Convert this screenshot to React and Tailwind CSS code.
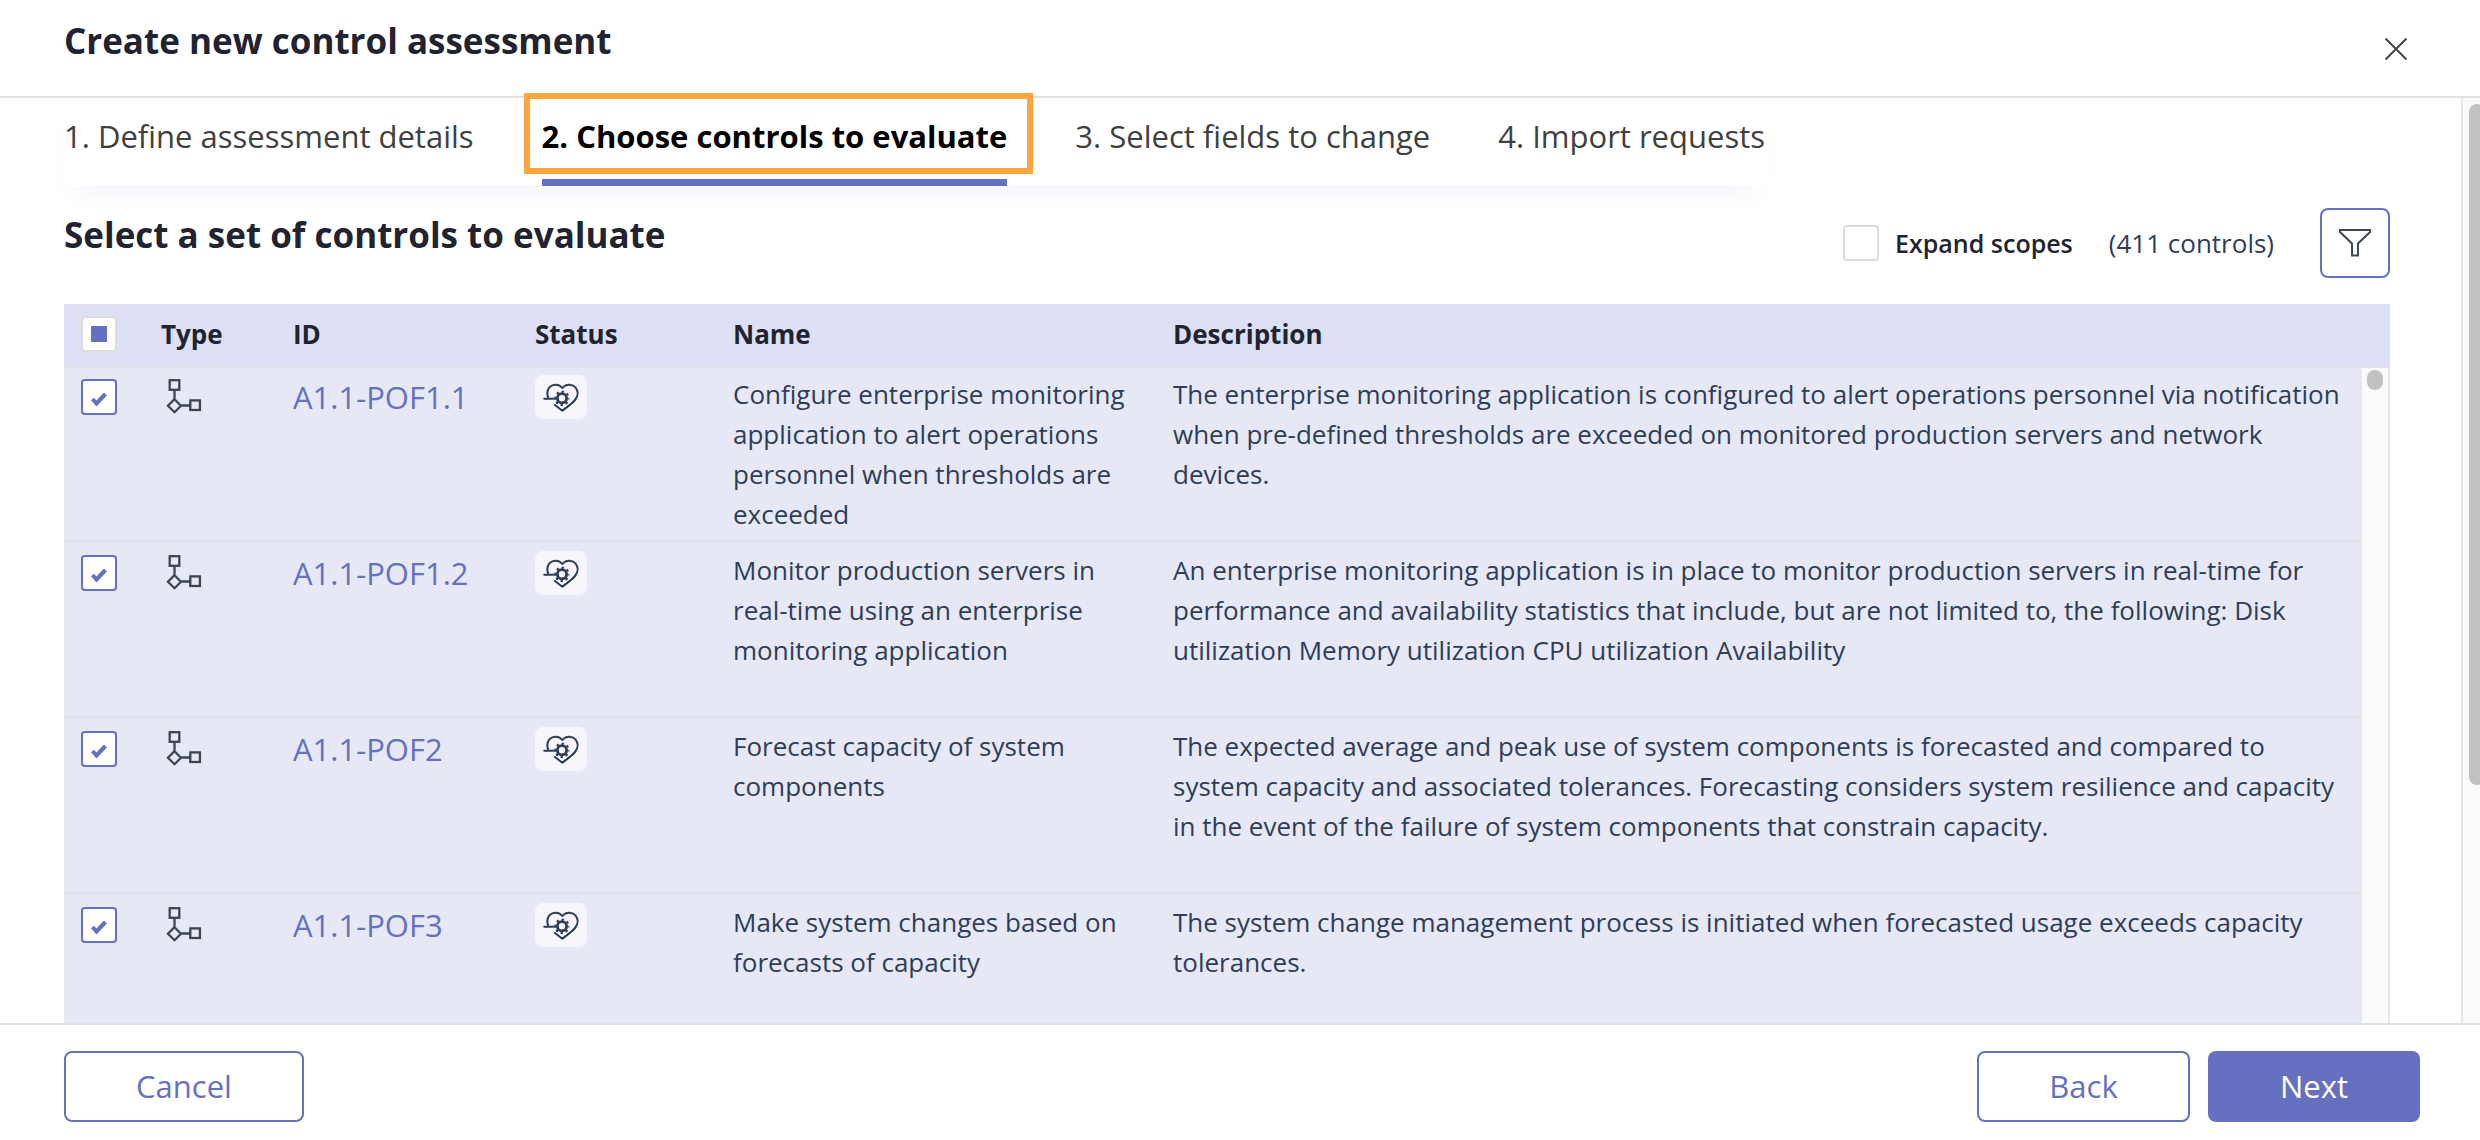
import { useState } from 'react';

const STEPS = [
  '1. Define assessment details',
  '2. Choose controls to evaluate',
  '3. Select fields to change',
  '4. Import requests',
];

const CONTROLS = [
  {
    id: 'A1.1-POF1.1',
    name: 'Configure enterprise monitoring application to alert operations personnel when thresholds are exceeded',
    description:
      'The enterprise monitoring application is configured to alert operations personnel via notification when pre-defined thresholds are exceeded on monitored production servers and network devices.',
  },
  {
    id: 'A1.1-POF1.2',
    name: 'Monitor production servers in real-time using an enterprise monitoring application',
    description:
      'An enterprise monitoring application is in place to monitor production servers in real-time for performance and availability statistics that include, but are not limited to, the following: Disk utilization Memory utilization CPU utilization Availability',
  },
  {
    id: 'A1.1-POF2',
    name: 'Forecast capacity of system components',
    description:
      'The expected average and peak use of system components is forecasted and compared to system capacity and associated tolerances. Forecasting considers system resilience and capacity in the event of the failure of system components that constrain capacity.',
  },
  {
    id: 'A1.1-POF3',
    name: 'Make system changes based on forecasts of capacity',
    description:
      'The system change management process is initiated when forecasted usage exceeds capacity tolerances.',
  },
];

function CloseIcon() {
  return (
    <svg viewBox="0 0 24 24" className="size-6" fill="none" stroke="#404040" strokeWidth="1.8">
      <path d="M1.5 1.5 22.5 22.5M22.5 1.5 1.5 22.5" />
    </svg>
  );
}

function FilterIcon() {
  return (
    <svg viewBox="0 0 32 28" className="h-7 w-8" fill="none" stroke="#3b4856" strokeWidth="2">
      <path d="M1 1H31V3L19 14.5V26.5H13V14.5L1 3Z" />
    </svg>
  );
}

function TypeIcon() {
  return (
    <svg viewBox="0 0 36 36" className="size-9" fill="none" stroke="#3a4752" strokeWidth="2.3">
      <rect x="3.7" y="1.2" width="9.6" height="9.6" />
      <rect x="24.3" y="21.4" width="9.6" height="9.6" />
      <path d="M8.5 11V20M15 26.5H24.5M8.5 20.2 15 26.7 8.5 33.2 2 26.7Z" />
    </svg>
  );
}

function HealthIcon() {
  return (
    <svg viewBox="0 0 36 30" className="h-[30px] w-9" fill="none" stroke="#2f3d57" strokeWidth="2" strokeLinecap="round" strokeLinejoin="round">
      <path d="M1.2 16.7H14M5.3 16C3.8 12 4.2 8 6.6 5.2C9.8 1.7 16 1.7 19.3 6C22.6 1.7 29 1.7 32.2 5.2C35.6 9 35.3 14 32 18C28.8 21.8 24 25 19.3 28.7L12 23" />
      <circle cx="19" cy="16.3" r="4.6" strokeWidth="2.8" />
      <circle cx="19" cy="16.3" r="6.5" strokeWidth="2.4" strokeDasharray="2.3 2.805" strokeDashoffset="1.15" strokeLinecap="butt" />
    </svg>
  );
}

function Checkbox({ checked, indeterminate, onChange, ...rest }) {
  return (
    <span className="relative block size-9 shrink-0">
      <input
        type="checkbox"
        checked={checked}
        onChange={onChange}
        className={`block size-9 appearance-none rounded-sm border-2 bg-white ${
          checked && !indeterminate ? 'border-[#6670c0]' : 'border-[#dcdcdc]'
        }`}
        {...rest}
      />
      {indeterminate && <span className="pointer-events-none absolute inset-0 m-auto size-4 bg-[#6670c0]" />}
      {checked && !indeterminate && (
        <svg viewBox="0 0 36 36" className="pointer-events-none absolute inset-0 size-9" fill="none" stroke="#6670c0" strokeWidth="4">
          <path d="M11.5 20 15.5 24.5 24.5 15" />
        </svg>
      )}
    </span>
  );
}

export default function App() {
  const [expand, setExpand] = useState(false);
  const [selected, setSelected] = useState(CONTROLS.map((c) => c.id));

  const toggle = (id) =>
    setSelected((prev) => (prev.includes(id) ? prev.filter((x) => x !== id) : [...prev, id]));

  return (
    <div className="flex h-screen flex-col bg-white font-['Open_Sans',sans-serif] text-[#2f3d57]">
      <header className="flex h-[98px] shrink-0 items-center justify-between border-b-2 border-[#dee2e6] pr-[72px] pl-16">
        <h1 className="pb-[14px] text-[35px] leading-[48px] font-bold text-[#212330]">Create new control assessment</h1>
        <button type="button" aria-label="Close" className="pt-[2px]">
          <CloseIcon />
        </button>
      </header>

      <div className="flex min-h-0 flex-1">
        <main className="flex min-w-0 flex-1 flex-col pr-[71px] pl-16">
          <nav className="flex h-[88px] w-fit shrink-0 gap-[68px] text-[31px] leading-[44px] text-[#404040] shadow-[0_16px_24px_-12px_rgba(102,112,192,0.09)]">
            {STEPS.map((step, i) => (
              <a
                key={step}
                href="#"
                className={`relative flex h-[88px] pt-4 whitespace-nowrap ${
                  i === 1 ? 'border-b-[7px] border-[#6670c0] font-bold text-black' : ''
                }`}
              >
                {step}
                {i === 1 && (
                  <span className="pointer-events-none absolute -top-[5px] -right-[26px] -left-[18px] h-[81px] border-[6px] border-[#ffa53d]" />
                )}
              </a>
            ))}
          </nav>

          <div className="flex h-[118px] shrink-0 items-start justify-between pt-[22px]">
            <h2 className="pt-[3px] text-[35px] leading-[48px] font-bold text-[#212330]">Select a set of controls to evaluate</h2>
            <div className="flex items-center">
              <Checkbox id="expand" checked={expand} onChange={() => setExpand(!expand)} />
              <label htmlFor="expand" className="ml-4 text-[25px] leading-9 font-semibold text-[#212330]">
                Expand scopes
              </label>
              <span className="ml-9 text-[26px] leading-9">(411 controls)</span>
              <button
                type="button"
                aria-label="Filter"
                className="ml-[46px] flex size-[70px] items-center justify-center rounded-lg border-2 border-[#6670c0]"
              >
                <FilterIcon />
              </button>
            </div>
          </div>

          <div className="flex min-h-0 flex-1 items-start overflow-hidden">
            <table className="min-w-0 flex-1 table-fixed border-separate border-spacing-0 text-left text-[26px] leading-10">
              <colgroup>
                <col className="w-[97px]" />
                <col className="w-[132px]" />
                <col className="w-[242px]" />
                <col className="w-[198px]" />
                <col className="w-[440px]" />
                <col />
              </colgroup>
              <thead className="bg-[#dddff5] text-[#212330]">
                <tr className="h-[62px] *:pb-[2px] *:font-bold">
                  <th className="pl-[17px]">
                    <Checkbox aria-label="Select all" checked indeterminate onChange={() => setSelected([])} />
                  </th>
                  <th>Type</th>
                  <th>ID</th>
                  <th>Status</th>
                  <th>Name</th>
                  <th>Description</th>
                </tr>
              </thead>
              <tbody className="bg-[#e6e8f5] align-top">
                {CONTROLS.map((c) => (
                  <tr key={c.id} className="h-44 *:border-b-2 *:border-[#dee0ea] first:*:shadow-[inset_0_2px_0_#dee0ea]">
                    <td className="pt-[13px] pl-[17px]">
                      <Checkbox aria-label={c.id} checked={selected.includes(c.id)} onChange={() => toggle(c.id)} />
                    </td>
                    <td className="pt-[13px] pl-[5px]">
                      <TypeIcon />
                    </td>
                    <td className="pt-[9px]">
                      <a href="#" className="text-[31px] leading-[44px] text-[#6670c0]">{c.id}</a>
                    </td>
                    <td className="pt-[9px]">
                      <span className="flex h-11 w-[52px] items-center justify-center rounded-lg bg-[#f6f6fb]">
                        <HealthIcon />
                      </span>
                    </td>
                    <td className="pt-2 pr-8">{c.name}</td>
                    <td className="pt-2 pr-3">{c.description}</td>
                  </tr>
                ))}
              </tbody>
            </table>
            <div className="flex w-[30px] shrink-0 flex-col self-stretch">
              <div className="h-16 border-b-2 border-[#dee0ea] bg-[#dddff5]" />
              <div className="flex flex-1 items-start justify-center border-x-2 border-[#e8e8e8] bg-[#fafafa] pt-[2px]">
                <div className="h-5 w-4 rounded-full bg-[#c1c1c1]" />
              </div>
            </div>
          </div>
        </main>
        <div className="w-[19px] shrink-0 overflow-hidden border-l-2 border-[#e8e8e8] bg-[#fafafa] pt-[6px] pl-[6px]">
          <div className="h-[681px] w-4 rounded-full bg-[#c1c1c1]" />
        </div>
      </div>

      <footer className="flex h-[117px] shrink-0 items-start justify-between border-t-2 border-[#dee2e6] pt-[26px] pr-[60px] pl-16 text-[31px]">
        <button type="button" className="h-[71px] w-60 rounded-lg border-2 border-[#6670c0] text-[#6670c0]">
          Cancel
        </button>
        <div className="flex gap-[18px]">
          <button type="button" className="h-[71px] w-[213px] rounded-lg border-2 border-[#6670c0] text-[#6670c0]">
            Back
          </button>
          <button type="button" className="h-[71px] w-[212px] rounded-lg bg-[#6670c0] text-white">
            Next
          </button>
        </div>
      </footer>
    </div>
  );
}
